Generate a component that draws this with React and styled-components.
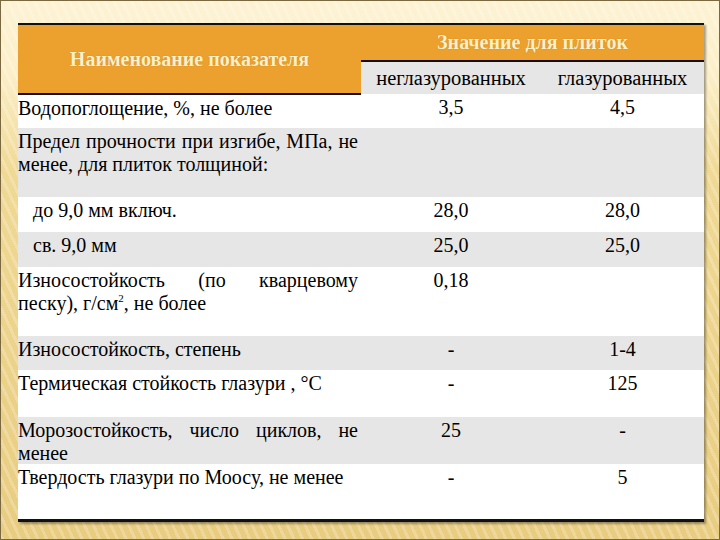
import React from "react";
import styled, { createGlobalStyle } from "styled-components";

const Global = createGlobalStyle`
  html, body { margin: 0; padding: 0; }
  body { font-family: "Liberation Serif", serif; }
  table, th, td { font-family: "Liberation Serif", serif; }
`;

const Frame = styled.div`
  width: 720px;
  height: 540px;
  box-sizing: border-box;
  padding: 22px 17px 0 17px;
  border: 1px solid #7a6840;
  font-family: "Liberation Serif", serif;
  background:
    repeating-linear-gradient(65deg, rgba(255, 255, 255, 0.22) 0 3px, transparent 3px 8px),
    linear-gradient(to bottom, #fdf2d3 0, #fcefc8 70px, #f0d994 170px, #e8cc80 100%);
  overflow: hidden;
`;

const Table = styled.table`
  width: 686px;
  border-collapse: collapse;
  table-layout: fixed;
  border-top: 2px solid #111;
  border-bottom: 3px solid #111;
  box-shadow: 2px 2px 2px rgba(0, 0, 0, 0.35);
  font-family: "Liberation Serif", serif;
  font-size: 20px;
  color: #000;
`;

const HeadCell = styled.th`
  background: #eca02e;
  color: #fdf0c8;
  font-family: "Liberation Serif", serif;
  font-weight: bold;
  font-size: 20px;
  text-align: center;
  padding: 0;
  height: ${(p) => p.$h}px;
  border-bottom: 2px solid #1a0d05;
  text-shadow: 0 0 1px rgba(120, 70, 0, 0.4);
`;

const SubHead = styled.td`
  background: #e6e6e6;
  font-family: "Liberation Serif", serif;
  font-size: 20.5px;
  text-align: center;
  height: 32px;
  padding: 0;
  line-height: 24px;
`;

const Row = styled.tr`
  background: ${(p) => (p.$grey ? "#e6e6e6" : "#fff")};
  height: ${(p) => p.$h}px;
`;

const Label = styled.td`
  vertical-align: top;
  font-family: "Liberation Serif", serif;
  padding: 2px 3px 0 ${(p) => (p.$indent ? 15 : 0)}px;
  line-height: 22.5px;
  text-align: justify;
`;

const Value = styled.td`
  vertical-align: top;
  font-family: "Liberation Serif", serif;
  padding: 2px 0 0 0;
  line-height: 22.5px;
  text-align: center;
`;

const Sup = styled.sup`
  font-size: 11px;
  line-height: 0;
  vertical-align: 8px;
`;

const rows = [
  { label: "Водопоглощение, %, не более", a: "3,5", b: "4,5", h: 34 },
  {
    label: "Предел прочности при изгибе, МПа, не менее, для плиток толщиной:",
    a: "",
    b: "",
    h: 69,
    grey: true,
  },
  { label: "до 9,0 мм включ.", a: "28,0", b: "28,0", h: 35, indent: true },
  { label: "св. 9,0 мм", a: "25,0", b: "25,0", h: 35, grey: true, indent: true },
  {
    label: (
      <>
        Износостойкость (по кварцевому песку), г/см<Sup>2</Sup>, не более
      </>
    ),
    a: "0,18",
    b: "",
    h: 69,
  },
  { label: "Износостойкость, степень", a: "-", b: "1-4", h: 34, grey: true },
  { label: "Термическая стойкость глазури , °С", a: "-", b: "125", h: 47 },
  { label: "Морозостойкость, число циклов, не менее", a: "25", b: "-", h: 47, grey: true },
  { label: "Твердость глазури по Моосу, не менее", a: "-", b: "5", h: 56 },
];

export default function App() {
  return (
    <Frame>
      <Global />
      <Table>
        <colgroup>
          <col style={{ width: "343px" }} />
          <col style={{ width: "180px" }} />
          <col style={{ width: "163px" }} />
        </colgroup>
        <thead>
          <tr>
            <HeadCell rowSpan={2} $h={68}>
              Наименование показателя
            </HeadCell>
            <HeadCell colSpan={2} $h={34}>
              Значение для плиток
            </HeadCell>
          </tr>
          <tr>
            <SubHead>неглазурованных</SubHead>
            <SubHead>глазурованных</SubHead>
          </tr>
        </thead>
        <tbody>
          {rows.map((r, i) => (
            <Row key={i} $grey={r.grey} $h={r.h}>
              <Label $indent={r.indent}>{r.label}</Label>
              <Value>{r.a}</Value>
              <Value>{r.b}</Value>
            </Row>
          ))}
        </tbody>
      </Table>
    </Frame>
  );
}
